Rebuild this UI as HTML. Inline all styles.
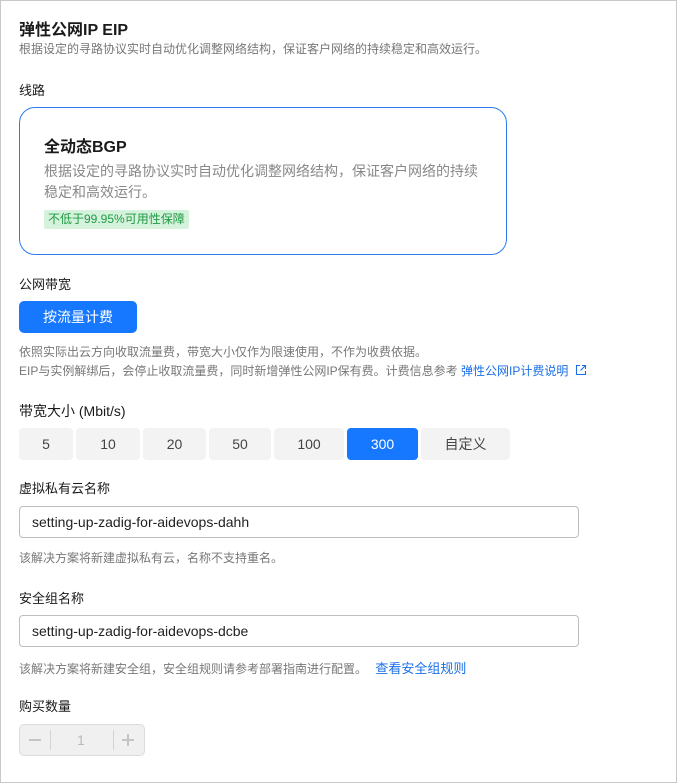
<!DOCTYPE html>
<html><head><meta charset="utf-8"><style>
*{margin:0;padding:0;box-sizing:border-box}
body{width:677px;height:783px;background:#fff;font-family:"Liberation Sans","Noto Sans CJK SC",sans-serif;position:relative;overflow:hidden;color:#1a1a1a}
.frame{position:absolute;left:0;top:0;width:677px;height:783px;border:1px solid #c8c8c8}
.a{position:absolute;white-space:nowrap}
.lbl{font-size:13px;color:#1a1a1a}
.note{font-size:12px;color:#777}
.bw{position:absolute;top:428px;height:32px;background:#f3f3f3;border-radius:4px;font-size:14px;color:#444;display:flex;align-items:center;justify-content:center}
.inp{position:absolute;left:19px;width:560px;height:32px;border:1px solid #bdbdbd;border-radius:4px;font-size:14px;color:#222;padding-left:12px;line-height:30px}
.link{color:#1a6fe8}
</style></head><body>
<div class="frame"></div>
<div class="a" style="left:19px;top:16px;font-size:16px;font-weight:bold">弹性公网IP EIP</div>
<div class="a note" style="left:19px;top:40px">根据设定的寻路协议实时自动优化调整网络结构，保证客户网络的持续稳定和高效运行。</div>
<div class="a lbl" style="left:19px;top:80px">线路</div>
<div class="a" style="left:19px;top:107px;width:488px;height:148px;border:1px solid #2b7cf0;border-radius:16px"></div>
<div class="a" style="left:44px;top:133px;font-size:16px;font-weight:bold">全动态BGP</div>
<div class="a" style="left:44px;top:161px;font-size:14px;color:#888;line-height:21px;white-space:normal;width:440px">根据设定的寻路协议实时自动优化调整网络结构，保证客户网络的持续稳定和高效运行。</div>
<div class="a" style="left:44px;top:210px;height:19px;padding:0 4px;background:#d5f2dc;color:#1f9a43;font-size:12px;line-height:19px;border-radius:2px">不低于99.95%可用性保障</div>
<div class="a lbl" style="left:19px;top:274px">公网带宽</div>
<div class="a" style="left:19px;top:301px;width:118px;height:32px;background:#1677ff;border-radius:5px;color:#fff;font-size:14px;line-height:32px;text-align:center">按流量计费</div>
<div class="a note" style="left:19px;top:343px">依照实际出云方向收取流量费，带宽大小仅作为限速使用，不作为收费依据。</div>
<div class="a note" style="left:19px;top:362px">EIP与实例解绑后，会停止收取流量费，同时新增弹性公网IP保有费。计费信息参考 <span class="link">弹性公网IP计费说明</span> <svg width="12" height="12" viewBox="0 0 12 12" style="vertical-align:-1px;margin-left:3px"><path d="M5 1.5H1.5v9h9V7M7 1.5h3.5V5M10.5 1.5L5.5 6.5" fill="none" stroke="#1a6fe8" stroke-width="1.1"/></svg></div>
<div class="a" style="left:19px;top:401px;font-size:14px">带宽大小 (Mbit/s)</div>
<div class="bw" style="left:19px;width:54px">5</div>
<div class="bw" style="left:76px;width:64px">10</div>
<div class="bw" style="left:143px;width:63px">20</div>
<div class="bw" style="left:209px;width:62px">50</div>
<div class="bw" style="left:274px;width:70px">100</div>
<div class="bw" style="left:347px;width:71px;background:#1677ff;color:#fff">300</div>
<div class="bw" style="left:421px;width:89px">自定义</div>
<div class="a lbl" style="left:19px;top:478px">虚拟私有云名称</div>
<div class="inp" style="top:506px">setting-up-zadig-for-aidevops-dahh</div>
<div class="a note" style="left:19px;top:549px">该解决方案将新建虚拟私有云，名称不支持重名。</div>
<div class="a lbl" style="left:19px;top:588px">安全组名称</div>
<div class="inp" style="top:615px">setting-up-zadig-for-aidevops-dcbe</div>
<div class="a note" style="left:19px;top:658px">该解决方案将新建安全组，安全组规则请参考部署指南进行配置。 <span class="link" style="margin-left:5px;font-size:13px">查看安全组规则</span></div>
<div class="a lbl" style="left:19px;top:696px">购买数量</div>
<div class="a" style="left:19px;top:724px;width:126px;height:32px;background:#f0f0f0;border:1px solid #dcdcdc;border-radius:5px"></div>
<div class="a" style="left:50px;top:730px;width:1px;height:20px;background:#d4d4d4"></div>
<div class="a" style="left:113px;top:730px;width:1px;height:20px;background:#d4d4d4"></div>
<div class="a" style="left:29px;top:739px;width:12px;height:1.5px;background:#c4c4c4"></div>
<div class="a" style="left:122px;top:739px;width:12px;height:1.5px;background:#c4c4c4"></div>
<div class="a" style="left:127px;top:734px;width:1.5px;height:12px;background:#c4c4c4"></div>
<div class="a" style="left:77px;top:732px;font-size:14px;color:#bbb">1</div>
</body></html>
